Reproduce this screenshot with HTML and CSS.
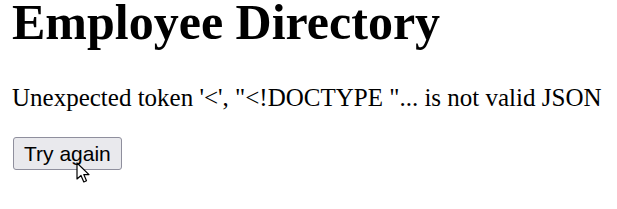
FILE: index.html
```html
<!DOCTYPE html>
<html lang="en">
<head>
  <meta charset="UTF-8">
  <meta name="viewport" content="width=device-width, initial-scale=1.0">
  <title>Employee Directory</title>
  <link rel="stylesheet" href="styles.css">
</head>
<body>

  <div class="app">
    <h1>Employee Directory</h1>
    <p class="error">Unexpected token '&lt;', "&lt;!DOCTYPE "... is not valid JSON</p>
    <div class="actions">
      <button type="button">Try again</button>
      <!-- mouse pointer resting on the button -->
      <svg class="cursor" viewBox="0 0 16 23">
        <path d="M1 1 L1 17 L5 13.5 L7.8 20 L10.5 18.8 L7.8 12.6 L13 12.6 Z" fill="#ffffff" stroke="#000000" stroke-width="1.2" stroke-linejoin="round"/>
      </svg>
    </div>
  </div>

</body>
</html>
```

FILE: styles.css
```css
* {
  box-sizing: border-box;
}

body {
  margin: 0;
  padding: 0 12px;
  height: 100vh;
  font-family: "Liberation Serif", "Times New Roman", serif;
  background: #fff;
  color: #000;
}

h1 {
  font-size: 50px;
  font-weight: bold;
  margin: 0;
  line-height: 44px;
}

.error {
  font-size: 25px;
  margin: 40px 0 0;
  line-height: 28px;
}

.actions {
  position: relative;
  margin-top: 25px;
}

button {
  display: block;
  font-family: "Liberation Sans", Arial, sans-serif;
  font-size: 21px;
  color: #000;
  background-color: #e9e9ed;
  border: 1px solid #8f8f9d;
  border-radius: 3px;
  padding: 0 10px;
  margin-left: 1px;
  height: 33px;
}

.cursor {
  position: absolute;
  z-index: 2;
  display: block;
  overflow: visible;
  width: 16px;
  height: 23px;
  left: 64px;
  top: 25px;
}
```
